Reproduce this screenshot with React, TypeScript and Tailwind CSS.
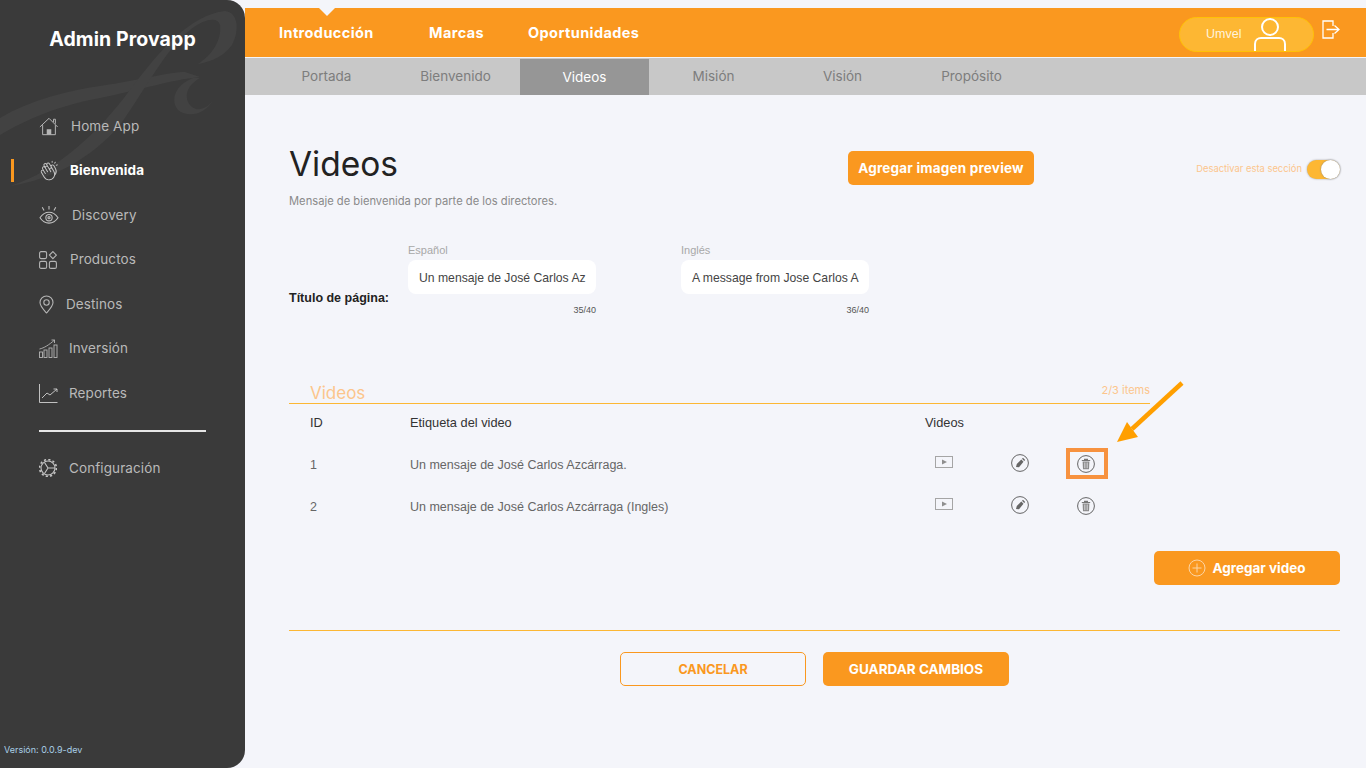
import { ReactNode } from "react";
import { PiHandsClappingLight } from "react-icons/pi";

const display = "font-['Inter',sans-serif]";
const body = "font-['Liberation_Sans',Arial,sans-serif]";

function HomeIcon() {
  return (
    <svg width="21" height="19" viewBox="0 0 22 20" fill="none" stroke="#b5b5b5" strokeWidth="1.1">
      <path d="M1 10.5 11 1l9.5 9.5M4 8.5V19h14V8.5M16 5V2h2v5" />
      <rect x="8.5" y="13" width="5" height="6" fill="#b5b5b5" stroke="none" />
    </svg>
  );
}

function EyeIcon() {
  return (
    <svg width="20" height="18" viewBox="0 0 22 20" fill="none" stroke="#c0c0c0" strokeWidth="1.2">
      <path d="M1 13c3-4.500 6-6 10-6s7 1.500 10 6c-3 4.500-6 6-10 6s-7-1.500-10-6Z" />
      <circle cx="11" cy="13" r="3.500" />
      <circle cx="11" cy="13" r="1.200" />
      <path d="M11 0v4M3.500 1.500 5.500 5M18.500 1.500 16.500 5" />
    </svg>
  );
}

function ProductsIcon() {
  return (
    <svg width="18" height="18" viewBox="0 0 18 18" fill="none" stroke="#b5b5b5" strokeWidth="1.1">
      <rect x="0.600" y="0.600" width="7" height="7" rx="1.500" />
      <rect x="0.600" y="10.400" width="7" height="7" rx="1.500" />
      <rect x="10.400" y="10.400" width="7" height="7" rx="1.500" />
      <path d="m13.900.600 3.500 3.500-3.500 3.500-3.500-3.500Z" />
    </svg>
  );
}

function PinIcon() {
  return (
    <svg width="15" height="19" viewBox="0 0 15 19" fill="none" stroke="#b5b5b5" strokeWidth="1.1">
      <path d="M7.500 18C4 14 1 11 1 7.500a6.500 6.500 0 0 1 13 0C14 11 11 14 7.500 18Z" />
      <circle cx="7.500" cy="7.500" r="2.700" />
    </svg>
  );
}

function InvestIcon() {
  return (
    <svg width="19" height="19" viewBox="0 0 19 19" fill="none" stroke="#b5b5b5" strokeWidth="0.900">
      <rect x="0.500" y="13" width="3" height="5.500" />
      <rect x="5" y="11" width="3" height="7.500" />
      <rect x="10" y="9" width="3" height="9.500" />
      <rect x="15" y="6" width="3" height="12.500" />
      <path d="M.500 10C5 9 10 6 15.500 1M12.500 1h3v3" />
    </svg>
  );
}

function ReportIcon() {
  return (
    <svg width="19" height="19" viewBox="0 0 19 19" fill="none" stroke="#d0d0d0" strokeWidth="0.900">
      <path d="M.500 0v18.500H18.500" />
      <path d="m3 14 5-5 3 2 7-6M14.500 5H18v3" />
    </svg>
  );
}

function GearIcon() {
  return (
    <svg width="18" height="18" viewBox="0 0 18 18" fill="none" stroke="#c4c4c4" strokeWidth="1.100">
      <circle cx="9" cy="9" r="7" />
      <circle cx="9" cy="9" r="8.400" strokeDasharray="2.200 2.200" strokeWidth="1.600" />
      <path d="M5.500 3.500 9 9l-3.500 5.500M9 9h7" />
    </svg>
  );
}

function Watermark() {
  return (
    <svg className="absolute left-0 top-0" width="245" height="200" viewBox="0 0 245 200" fill="#424242">
      <path d="M0 118C30 100 70 90 100 86c40-6 70-14 85-14l15 5c-30 3-60 13-100 21-40 7-75 22-100 37Z" />
      <path d="M10 186c50-16 90-56 120-96 30-40 60-75 95-79 13 1 15 19 7 34-7 10-20 17-34 19 14-9 24-24 22-39-2-8-15-7-30 5-25 20-45 60-70 95-30 35-70 55-110 61Z" />
      <path d="M193 78c-18 7-23 22-15 32 10 8 27 5 35-10-6 10-18 12-23 5-7-10-2-20 10-27Z" />
    </svg>
  );
}

type NavItem = { label: string; icon: ReactNode; active?: boolean; gap: string };

const navItems: NavItem[] = [
  { label: "Home App", icon: <HomeIcon />, gap: "ml-[12px]" },
  { label: "Bienvenida", icon: <PiHandsClappingLight size={21} color="#c9c9c9" />, active: true, gap: "ml-[11px]" },
  { label: "Discovery", icon: <EyeIcon />, gap: "ml-[13px]" },
  { label: "Productos", icon: <ProductsIcon />, gap: "ml-[11px]" },
  { label: "Destinos", icon: <PinIcon />, gap: "ml-[7px]" },
  { label: "Inversión", icon: <InvestIcon />, gap: "ml-[10px]" },
  { label: "Reportes", icon: <ReportIcon />, gap: "ml-[10px]" },
];

function SideRow({ item }: { item: NavItem }) {
  return (
    <div className="relative flex h-[44.5px] items-center pl-[39px]">
      {item.active && <div className="absolute left-[11px] top-[11px] h-[23px] w-[3px] bg-[#fa981f]" />}
      <span className="flex w-[20px] justify-start">{item.icon}</span>
      <span
        className={`${item.gap} ${display} text-[13.500px] tracking-[0.1px] ${item.active ? "font-bold text-white" : "text-[#b9b9b9]"}`}
      >
        {item.label}
      </span>
    </div>
  );
}

function Sidebar() {
  return (
    <aside className="relative flex h-[768px] w-[245px] shrink-0 flex-col overflow-hidden rounded-r-[18px] bg-[#3a3a3a]">
      <Watermark />
      <div className={`relative mt-[25px] text-center text-[19.500px] font-bold tracking-[0.1px] text-white ${display}`}>
        Admin Provapp
      </div>
      <nav className="relative mt-[49.500px]">
        {navItems.map((item) => (
          <SideRow key={item.label} item={item} />
        ))}
      </nav>
      <div className="relative ml-[39px] mt-[15px] h-[2px] w-[167px] bg-[#e6e6e6]" />
      <div className="relative mt-[14px] flex h-[44px] items-center pl-[39px]">
        <span className="flex w-[20px]">
          <GearIcon />
        </span>
        <span className={`ml-[10px] text-[13.500px] tracking-[0.1px] text-[#b9b9b9] ${display}`}>Configuración</span>
      </div>
      <div className={`relative mt-auto mb-[12px] pl-[4px] text-[9px] text-[#a9cfe6] ${display}`}>Versión: 0.0.9-dev</div>
    </aside>
  );
}

function TopBar() {
  const tabs = ["Portada", "Bienvenido", "Videos", "Misión", "Visión", "Propósito"];
  return (
    <header>
      <div className="relative mt-[8px] flex h-[49px] items-center bg-[#fa981f] pl-[34px]">
        <div className="absolute left-[74px] top-0 h-0 w-0 border-x-[8px] border-t-[8px] border-x-transparent border-t-[#f4f5fa]" />
        <div className={`flex text-[14.500px] font-bold tracking-[0.4px] text-white ${display}`}>
          <span className="w-[150px]">Introducción</span>
          <span className="w-[99px]">Marcas</span>
          <span>Oportunidades</span>
        </div>
        <div className="ml-auto mr-[26px] flex items-center">
          <div className="relative mt-[3px] flex h-[35px] w-[135px] items-center overflow-hidden rounded-full border border-[#ffc107] bg-[#fdb733] pl-[26px] pt-[1px]">
            <span className={`text-[12.500px] text-[#fff3dd] ${body}`}>Umvel</span>
            <svg className="absolute left-[73px] top-0" width="34" height="34" viewBox="0 0 34 34" fill="none" stroke="#fff" strokeWidth="2">
              <circle cx="17" cy="9" r="8" />
              <path d="M2 34v-8c0-4 3-6 6-6h18c3 0 6 2 6 6v8" />
            </svg>
          </div>
          <svg className="ml-[8px] mb-[5px]" width="18" height="20" viewBox="0 0 18 20" fill="none" stroke="#fff" strokeWidth="1.300">
            <path d="M11 6V1H1v17h10v-5M4.500 9.500h12M12.500 5.500l4.500 4-4.500 4" />
          </svg>
        </div>
      </div>
      <div className="mt-[1px] flex h-[37px] bg-[#c8c8c8] pl-[17px]">
        {tabs.map((t) => (
          <div
            key={t}
            className={`flex w-[129px] items-center justify-center text-[13.500px] ${display} ${
              t === "Videos" ? "mt-[1px] bg-[#969696] text-white" : "text-[#7d7d7d]"
            }`}
          >
            {t}
          </div>
        ))}
      </div>
    </header>
  );
}

function LangField({ label, value, count }: { label: string; value: string; count: string }) {
  return (
    <div className="w-[188px]">
      <div className={`mb-[3px] text-[11px] leading-[13px] text-[#a8a8a8] ${body}`}>{label}</div>
      <div className={`flex h-[34px] items-center overflow-hidden whitespace-nowrap rounded-[8px] bg-white px-[11px] pt-[2px] text-[12.200px] text-[#444] ${body}`}>
        {value}
      </div>
      <div className={`mt-[11px] text-right text-[9px] leading-[11px] text-[#555] ${body}`}>{count}</div>
    </div>
  );
}

function PlayIcon() {
  return (
    <svg width="18" height="12" viewBox="0 0 18 12">
      <rect x="0.500" y="0.500" width="17" height="11" fill="#f4f5fa" stroke="#a5a5a5" />
      <path d="M7 3.500 12 6 7 8.500Z" fill="#8f8f8f" />
    </svg>
  );
}

function PencilIcon() {
  return (
    <svg width="18" height="18" viewBox="0 0 18 18">
      <circle cx="9" cy="9" r="8.400" fill="none" stroke="#555" strokeWidth="0.900" />
      <path d="M5 13l.800-3 4.500-4.500 2.200 2.200L8 13.200ZM11 4.800l1-1 2.200 2.200-1 1Z" fill="#666" />
    </svg>
  );
}

function TrashIcon() {
  return (
    <svg width="18" height="18" viewBox="0 0 18 18">
      <circle cx="9" cy="9" r="8.400" fill="none" stroke="#555" strokeWidth="0.900" />
      <path d="M4.800 5h8.400v1H4.800ZM7 3.800h4V5H7Z" fill="#777" />
      <path d="M5.600 6.500h6.800l-.4 7.700H6Z" fill="#8a8a8a" />
      <path d="M7.500 7.500v5.700M9 7.500v5.700M10.500 7.500v5.700" stroke="#f4f5fa" strokeWidth="0.500" />
    </svg>
  );
}

function VideoRow({ id, label, highlight }: { id: number; label: string; highlight?: boolean }) {
  return (
    <div className={`grid h-[42px] grid-cols-[121px_525px_76px_66px_18px] items-center text-[12.500px] text-[#666] ${body}`}>
      <span className="pl-[21px] pt-[3px]">{id}</span>
      <span className="pt-[3px]">{label}</span>
      <span className="flex pb-[3px]">
        <PlayIcon />
      </span>
      <span className="flex pb-[1px]">
        <PencilIcon />
      </span>
      <span className="relative flex">
        <TrashIcon />
        {highlight && (
          <span className="absolute left-[-11px] top-[-7px] h-[31px] w-[42px] border-[4px] border-[#f7923f]" />
        )}
      </span>
    </div>
  );
}

function Content() {
  return (
    <main className="pl-[44px] pr-[26px]">
      <div className="mt-[56px] flex items-start">
        <div className="w-[559px]">
          <h1 className={`text-[33.500px] leading-[26px] font-normal text-[#222] ${display}`}>Videos</h1>
          <p className={`mt-[16px] text-[11.200px] text-[#8a8a8a] ${display}`}>Mensaje de bienvenida por parte de los directores.</p>
        </div>
        <button className={`h-[34px] w-[186px] rounded-[5px] bg-[#fa981f] text-[13.500px] font-bold tracking-[0.2px] text-white ${display}`}>
          Agregar imagen preview
        </button>
        <div className="ml-auto mt-[9px] flex items-center">
          <span className={`mr-[5px] text-[9.400px] text-[#fcc58c] ${display}`}>Desactivar esta sección</span>
          <span className="relative h-[19px] w-[33px] rounded-full bg-[#fdb733] shadow-[0_0_2px_#999]">
            <span className="absolute right-0 top-0 h-[19px] w-[19px] rounded-full bg-white shadow-[0_0_2px_#888]" />
          </span>
        </div>
      </div>

      <div className="mt-[34px] flex items-start">
        <div className={`mt-[45px] w-[119px] text-[12.500px] font-bold text-[#222] ${body}`}>Título de página:</div>
        <LangField label="Español" value="Un mensaje de José Carlos Az" count="35/40" />
        <div className="w-[85px]" />
        <LangField label="Inglés" value="A message from Jose Carlos A" count="36/40" />
      </div>

      <div className="mt-[64px] w-[861px]">
        <div className="flex h-[24px] items-end justify-between border-b border-[#fcb734] pl-[21px]">
          <span className={`text-[17px] leading-[20px] text-[#fcc58c] ${display}`}>Videos</span>
          <span className={`mb-[4px] text-[11px] text-[#fcc58c] ${display}`}>2/3 items</span>
        </div>
        <div className={`mb-[2px] grid h-[37px] grid-cols-[121px_515px_1fr] items-center text-[12.800px] text-[#333] ${body}`}>
          <span className="pl-[21px]">ID</span>
          <span>Etiqueta del video</span>
          <span>Videos</span>
        </div>
        <VideoRow id={1} label="Un mensaje de José Carlos Azcárraga." highlight />
        <VideoRow id={2} label="Un mensaje de José Carlos Azcárraga (Ingles)" />
      </div>

      <div className="mt-[24px] flex justify-end">
        <button className={`flex h-[34px] w-[186px] items-center justify-center gap-[6px] rounded-[5px] bg-[#fa981f] text-[13.500px] font-bold text-white ${display}`}>
          <svg width="18" height="18" viewBox="0 0 18 18" fill="none" stroke="#fcd5a5" strokeWidth="1">
            <circle cx="9" cy="9" r="8" />
            <path d="M9 4.500v9M4.500 9h9" />
          </svg>
          Agregar video
        </button>
      </div>

      <div className="mt-[45px] h-px bg-[#fcb734]" />

      <div className="mt-[21px] flex justify-center gap-[17px]">
        <button className={`h-[34px] w-[186px] rounded-[5px] border border-[#fa981f] pt-[3px] text-[12.500px] font-bold text-[#fa981f] ${display}`}>
          CANCELAR
        </button>
        <button className={`h-[34px] w-[186px] rounded-[5px] bg-[#fa981f] text-[13.500px] font-bold text-white ${display}`}>
          GUARDAR CAMBIOS
        </button>
      </div>
    </main>
  );
}

export default function App() {
  return (
    <div className="relative flex h-[768px] w-[1366px] overflow-hidden bg-[#f4f5fa]">
      <Sidebar />
      <div className="flex-1">
        <TopBar />
        <Content />
      </div>
      {/* annotation arrow over the trash icon */}
      <svg className="absolute left-[1110px] top-[378px]" width="80" height="70" viewBox="0 0 80 70">
        <path d="M72 5 22 51" stroke="#ff9f00" strokeWidth="4.500" fill="none" />
        <path d="M7 64 17 44l11 15Z" fill="#ff9f00" />
      </svg>
    </div>
  );
}
